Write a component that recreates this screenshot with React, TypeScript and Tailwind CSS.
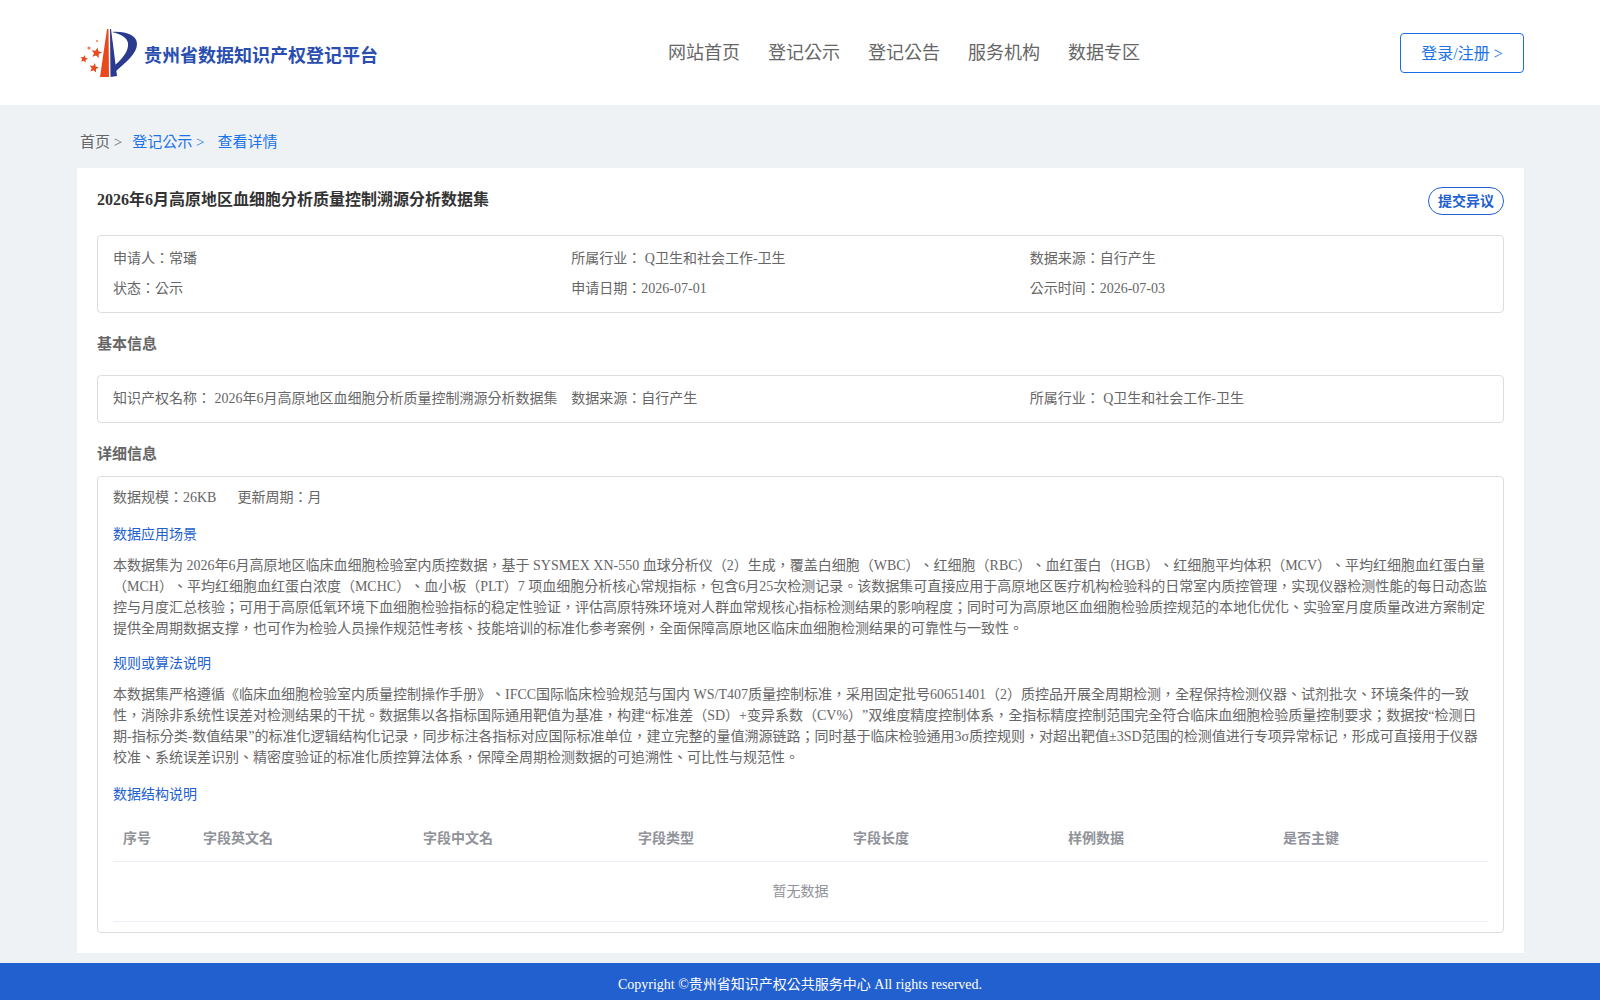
import React from 'react';

const star = (cx: number, cy: number, r: number) =>
  Array.from({ length: 10 }, (_, i) => {
    const a = (Math.PI / 5) * i - Math.PI / 2 + 0.2;
    const d = i % 2 === 0 ? r : r * 0.45;
    return `${(cx + Math.cos(a) * d).toFixed(2)},${(cy + Math.sin(a) * d).toFixed(2)}`;
  }).join(' ');

const Logo: React.FC = () => (
  <svg width="60" height="52" viewBox="0 0 60 52" className="shrink-0">
    <path d="M27 2 L28.5 2 L29 50 L20 50 Z" fill="#e8491d" />
    <path d="M30 2 L31 2 L37 49 L30.5 50 Z" fill="#2a3a8f" />
    <path d="M32 5 C45 4 57 8 57 17 C57 27 45 36 36 44 L35 38 C42 32 49 24 48 16 C47 10 40 7 32 5 Z" fill="#2a3a8f" />
    <polygon points={star(16.5, 26, 5.5)} fill="#e8491d" />
    <polygon points={star(4, 32, 4)} fill="#e8491d" />
    <polygon points={star(14, 41, 5)} fill="#e8491d" />
    <circle cx="9" cy="21" r="1.6" fill="#ef7a52" />
    <circle cx="17" cy="14" r="1" fill="#ef7a52" />
  </svg>
);

const InfoRow: React.FC<{ items: string[] }> = ({ items }) => (
  <div className="grid grid-cols-3">
    {items.map((t) => (
      <div key={t} className="h-[30px] leading-[30px]">{t}</div>
    ))}
  </div>
);

const columns = [
  { name: '序号', w: 'w-[80px]' },
  { name: '字段英文名', w: 'w-[220px]' },
  { name: '字段中文名', w: 'w-[215px]' },
  { name: '字段类型', w: 'w-[215px]' },
  { name: '字段长度', w: 'w-[215px]' },
  { name: '样例数据', w: 'w-[215px]' },
  { name: '是否主键', w: 'flex-1' },
];

export default function App() {
  return (
    <div className="min-h-[1000px] bg-[#eff2f5] text-[14px] text-[#666666] [text-spacing-trim:space-all] font-['Liberation_Serif','Noto_Sans_CJK_TC',serif]">
      <header className="h-[105px] bg-white pl-[80px] pr-[76px] flex items-center">
        <div className="w-[520px] flex items-center">
          <Logo />
          <span className="ml-[4px] mt-[7px] text-[18px] font-bold text-[#2a4eb0] font-['Liberation_Sans','Noto_Sans_CJK_TC',sans-serif]">贵州省数据知识产权登记平台</span>
        </div>
        <nav className="w-[510px] ml-[68px] flex gap-[28px] text-[18px] text-[#666666] mt-[2px]">
          <span>网站首页</span>
          <span>登记公示</span>
          <span>登记公告</span>
          <span>服务机构</span>
          <span>数据专区</span>
        </nav>
        <button className="ml-auto w-[124px] h-[40px] pt-[2px] border border-[#1a6fe8] rounded text-[16px] text-[#1a73e8] bg-white">登录/注册 &gt;</button>
      </header>

      <div className="h-[63px] pl-[80px] pt-[22px] text-[15px] leading-[30px] flex">
        <span>首页 &gt;</span>
        <span className="ml-[10px] text-[#1a73e8]">登记公示 &gt;</span>
        <span className="ml-[13px] text-[#1a73e8]">查看详情</span>
      </div>

      <main className="ml-[77px] mr-[76px] bg-white px-[20px] pt-[20px] pb-[20px]">
        <div className="flex justify-between h-[47px]">
          <h1 className="text-[16px] font-bold text-[#333333] leading-[24px]">2026年6月高原地区血细胞分析质量控制溯源分析数据集</h1>
          <button className="w-[76px] h-[28px] -mt-[1px] border border-[#2160cf] rounded-[14px] text-[14px] font-bold text-[#2160cf] bg-white">提交异议</button>
        </div>

        <section className="border border-[#dddddd] rounded px-[15px] py-[8px]">
          <InfoRow items={['申请人：常璠', '所属行业： Q卫生和社会工作-卫生', '数据来源：自行产生']} />
          <InfoRow items={['状态：公示', '申请日期：2026-07-01', '公示时间：2026-07-03']} />
        </section>

        <h2 className="mt-[20px] h-[42px] text-[15px] font-bold leading-[22px]">基本信息</h2>
        <section className="border border-[#dddddd] rounded px-[15px] py-[8px]">
          <InfoRow items={['知识产权名称： 2026年6月高原地区血细胞分析质量控制溯源分析数据集', '数据来源：自行产生', '所属行业： Q卫生和社会工作-卫生']} />
        </section>

        <h2 className="mt-[20px] h-[33px] text-[15px] font-bold leading-[22px]">详细信息</h2>
        <section className="border border-[#dddddd] rounded px-[15px] pt-[6px] pb-[10px]">
          <div className="h-[30px] leading-[30px]">
            <span>数据规模：26KB</span>
            <span className="ml-[21px]">更新周期：月</span>
          </div>
          <h3 className="mt-[10px] text-[#2160cf] leading-[24px]">数据应用场景</h3>
          <p className="mt-[8px] leading-[21px]">本数据集为 2026年6月高原地区临床血细胞检验室内质控数据，基于 SYSMEX XN-550 血球分析仪（2）生成，覆盖白细胞（WBC）、红细胞（RBC）、血红蛋白（HGB）、红细胞平均体积（MCV）、平均红细胞血红蛋白量（MCH）、平均红细胞血红蛋白浓度（MCHC）、血小板（PLT）7 项血细胞分析核心常规指标，包含6月25次检测记录。该数据集可直接应用于高原地区医疗机构检验科的日常室内质控管理，实现仪器检测性能的每日动态监控与月度汇总核验；可用于高原低氧环境下血细胞检验指标的稳定性验证，评估高原特殊环境对人群血常规核心指标检测结果的影响程度；同时可为高原地区血细胞检验质控规范的本地化优化、实验室月度质量改进方案制定提供全周期数据支撑，也可作为检验人员操作规范性考核、技能培训的标准化参考案例，全面保障高原地区临床血细胞检测结果的可靠性与一致性。</p>
          <h3 className="mt-[13px] text-[#2160cf] leading-[24px]">规则或算法说明</h3>
          <p className="mt-[8px] leading-[21px]">本数据集严格遵循《临床血细胞检验室内质量控制操作手册》、IFCC国际临床检验规范与国内 WS/T407质量控制标准，采用固定批号60651401（2）质控品开展全周期检测，全程保持检测仪器、试剂批次、环境条件的一致性，消除非系统性误差对检测结果的干扰。数据集以各指标国际通用靶值为基准，构建“标准差（SD）+变异系数（CV%）”双维度精度控制体系，全指标精度控制范围完全符合临床血细胞检验质量控制要求；数据按“检测日期-指标分类-数值结果”的标准化逻辑结构化记录，同步标注各指标对应国际标准单位，建立完整的量值溯源链路；同时基于临床检验通用3σ质控规则，对超出靶值±3SD范围的检测值进行专项异常标记，形成可直接用于仪器校准、系统误差识别、精密度验证的标准化质控算法体系，保障全周期检测数据的可追溯性、可比性与规范性。</p>
          <h3 className="mt-[15px] text-[#2160cf] leading-[24px]">数据结构说明</h3>
          <div className="mt-[8px] h-[47px] flex items-center border-b border-[#ebeef5] font-bold text-[#909399]">
            {columns.map((c) => (
              <div key={c.name} className={`${c.w} pl-[10px]`}>{c.name}</div>
            ))}
          </div>
          <div className="h-[60px] flex items-center justify-center border-b border-[#ebeef5] text-[#909399]">暂无数据</div>
        </section>
      </main>

      <footer className="mt-[10px] h-[37px] bg-[#2260cf] text-white text-center leading-[43px]">Copyright ©贵州省知识产权公共服务中心 All rights reserved.</footer>
    </div>
  );
}
